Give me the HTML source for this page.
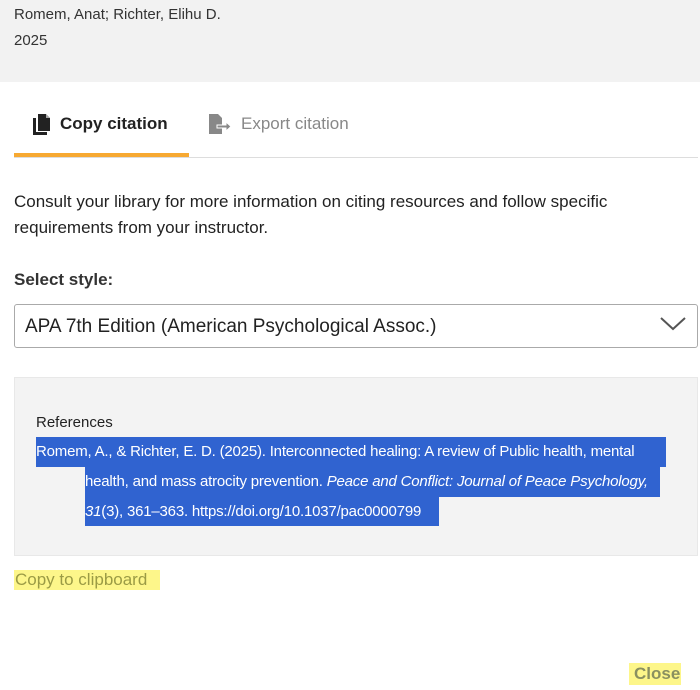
<!DOCTYPE html>
<html><head><style>
body{margin:0;width:700px;height:690px;position:relative;background:#fff;font-family:"Liberation Sans",sans-serif;color:#222;overflow:hidden}
.a{position:absolute;white-space:nowrap}
</style></head><body>
<div class="a" style="left:0;top:0;width:700px;height:82px;background:#f2f2f2"></div>
<div class="a" style="left:14px;top:6px;font-size:15px;color:#333">Romem, Anat; Richter, Elihu D.</div>
<div class="a" style="left:14px;top:32px;font-size:15px;color:#333">2025</div>

<svg class="a" style="left:32px;top:113px" width="20" height="22" viewBox="0 0 20 22"><path d="M1 5h3v14h11v3H1z" fill="#222"/><path d="M6 1h8l4 4v13H6z" fill="#222"/><path d="M14 1v4h4" fill="#fff" opacity=".6"/></svg>
<div class="a" style="left:60px;top:114px;font-size:17px;font-weight:bold;color:#222">Copy citation</div>
<svg class="a" style="left:208px;top:113px" width="24" height="22" viewBox="0 0 24 22"><path d="M1 1h9l4 4v16H1z" fill="#888"/><path d="M9 12h9v-3l5 4.5-5 4.5v-3H9z" fill="#888" stroke="#fff" stroke-width="1"/></svg>
<div class="a" style="left:241px;top:114px;font-size:17px;color:#888">Export citation</div>
<div class="a" style="left:14px;top:157px;width:684px;height:1px;background:#ddd"></div>
<div class="a" style="left:14px;top:153px;width:175px;height:4px;background:#f7a932"></div>

<div class="a" style="left:14px;top:189px;font-size:17px;line-height:26px;color:#222">Consult your library for more information on citing resources and follow specific<br>requirements from your instructor.</div>
<div class="a" style="left:14px;top:270px;font-size:17px;font-weight:bold;color:#333">Select style:</div>
<div class="a" style="left:14px;top:304px;width:682px;height:42px;border:1px solid #aaa;border-radius:3px"></div>
<div class="a" style="left:25px;top:316px;font-size:19px;color:#222">APA 7th Edition (American Psychological Assoc.)</div>
<svg class="a" style="left:660px;top:316px" width="26" height="16" viewBox="0 0 26 16"><path d="M1 2l12 11 12-11" fill="none" stroke="#555" stroke-width="2"/></svg>

<div class="a" style="left:14px;top:377px;width:684px;height:179px;background:#f3f3f3;border:1px solid #e8e8e8;box-sizing:border-box"></div>
<div class="a" style="left:36px;top:414px;font-size:15px;color:#222">References</div>
<div class="a" style="left:36px;top:437px;width:630px;height:30px;background:#3063d0"></div>
<div class="a" style="left:85px;top:467px;width:575px;height:30px;background:#3063d0"></div>
<div class="a" style="left:85px;top:497px;width:354px;height:29px;background:#3063d0"></div>
<div class="a" style="left:36px;top:443px;font-size:15px;color:#fff;letter-spacing:-.2px">Romem, A., &amp; Richter, E. D. (2025). Interconnected healing: A review of Public health, mental</div>
<div class="a" style="left:85px;top:473px;font-size:15px;color:#fff;letter-spacing:-.2px">health, and mass atrocity prevention. <i>Peace and Conflict: Journal of Peace Psychology,</i></div>
<div class="a" style="left:85px;top:503px;font-size:15px;color:#fff;letter-spacing:-.2px"><i>31</i>(3), 361–363. https://doi.org/10.1037/pac0000799</div>

<div class="a" style="left:14px;top:570px;height:20px;width:146px;background:#fdf68a"></div>
<div class="a" style="left:15px;top:570px;font-size:17px;color:#9b9b45">Copy to clipboard</div>
<div class="a" style="left:629px;top:663px;height:22px;width:52px;background:#fdf68a"></div>
<div class="a" style="left:634px;top:664px;font-size:17px;font-weight:bold;color:#8a9060">Close</div>
</body></html>
